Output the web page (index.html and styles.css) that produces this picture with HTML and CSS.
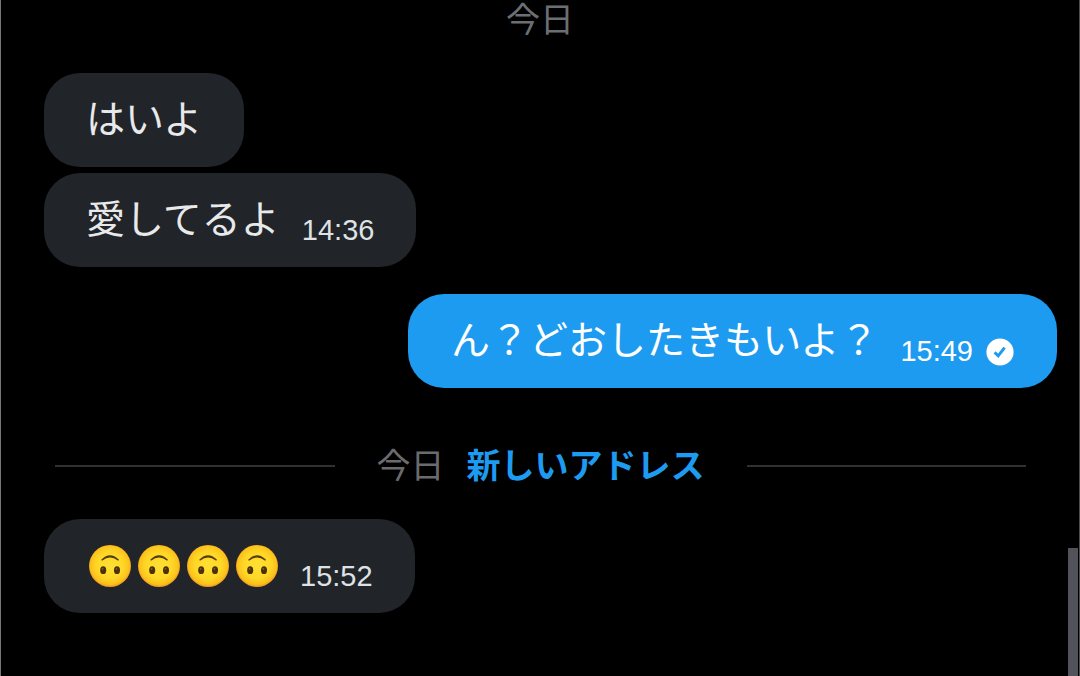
FILE: index.html
```html
<!DOCTYPE html>
<html lang="ja">
<head>
    <meta charset="UTF-8">
    <meta name="viewport" content="width=device-width, initial-scale=1.0">
    <title>メッセージ</title>
    <link rel="stylesheet" href="styles.css">
</head>
<body>
    <!-- Upside-down face, reused in the last message -->
    <svg class="sprite" aria-hidden="true">
        <defs>
            <radialGradient id="faceFill" cx="50%" cy="48%" r="52%">
                <stop offset="0" stop-color="#ffe032"/>
                <stop offset="0.6" stop-color="#ffd827"/>
                <stop offset="0.88" stop-color="#fcc21b"/>
                <stop offset="1" stop-color="#ef9420"/>
            </radialGradient>
        </defs>
        <symbol id="face" viewBox="0 0 42 42">
            <circle cx="21" cy="21" r="21" fill="url(#faceFill)"/>
            <path d="M12.4 14.6 Q21 5.8 29.8 14.6 Q30 15.8 28.8 15.4 Q21 9.6 13.4 15.4 Q12.2 15.8 12.4 14.6 Z" fill="#5a3c12"/>
            <ellipse cx="14.2" cy="25.2" rx="3" ry="3.9" fill="#4b300c"/>
            <ellipse cx="28" cy="25.2" rx="3" ry="3.9" fill="#4b300c"/>
            <circle cx="13.6" cy="23.8" r="0.9" fill="#8a6428"/>
            <circle cx="27.4" cy="23.8" r="0.9" fill="#8a6428"/>
        </symbol>
    </svg>

    <main class="chat">
        <p class="day">今日</p>

        <div class="message">
            <p class="text">はいよ</p>
        </div>
        <div class="message">
            <p class="text">愛してるよ</p>
            <time class="time">14:36</time>
        </div>

        <div class="message sent">
            <p class="text">ん？どおしたきもいよ？</p>
            <time class="time">15:49</time>
            <svg class="check" viewBox="0 0 28 28" role="img" aria-label="送信済み">
                <circle cx="14" cy="14" r="13.6" fill="#fff"/>
                <path d="M8.6 14.4 L12.2 17.8 L18.6 9.6" fill="none" stroke="#1d9bf0" stroke-width="3"/>
            </svg>
        </div>

        <div class="divider">
            <span class="divider-day">今日</span>
            <strong class="divider-new">新しいアドレス</strong>
        </div>

        <div class="message">
            <p class="faces">
                <svg class="face"><use href="#face"/></svg>
                <svg class="face"><use href="#face"/></svg>
                <svg class="face"><use href="#face"/></svg>
                <svg class="face"><use href="#face"/></svg>
            </p>
            <time class="time">15:52</time>
        </div>

        <div class="scrollbar"></div>
    </main>
</body>
</html>
```

FILE: styles.css
```css
* {
    box-sizing: border-box;
}
body {
    margin: 0;
    background-color: #000;
    color: #e7e9ea;
    font-family: "Liberation Sans", "Noto Sans CJK JP", sans-serif;
}
p {
    margin: 0;
}
.sprite {
    position: absolute;
    width: 0;
    height: 0;
}
.chat {
    position: relative;
    display: flex;
    flex-direction: column;
    align-items: flex-start;
    gap: 6px;
    min-height: 100vh;
    padding: 0 22px 0 43px;
    border-left: 1px solid #77777a;
    border-right: 1px solid #4c4c50;
}
.day {
    align-self: center;
    margin-right: 21px;
    margin-bottom: 27px;
    font-size: 34px;
    line-height: 40px;
    color: #6b6f73;
}
.message {
    display: flex;
    align-items: flex-end;
    padding: 20px 42px;
    border-radius: 36px;
    background-color: #212428;
}
.text {
    padding-bottom: 8px;
    font-family: "Noto Sans CJK JP", sans-serif;
    font-size: 39px;
    line-height: 46px;
}
.time {
    margin-left: 22px;
    font-size: 29px;
    line-height: 34px;
    color: #dfe2e4;
}
.sent {
    align-self: flex-end;
    margin-top: 21px;
    padding: 20px 43px;
    background-color: #1d9bf0;
    color: #fff;
}
.sent .time {
    color: #fff;
}
.check {
    width: 28px;
    height: 28px;
    margin-left: 13px;
    margin-bottom: 2px;
}

/* "new messages" line */
.divider {
    align-self: stretch;
    display: flex;
    align-items: center;
    gap: 22px;
    margin: 47px 31px 22px 11px;
    font-size: 34px;
    line-height: 50px;
}
.divider::before,
.divider::after {
    content: "";
    flex: 1;
    height: 2px;
    background-color: #2f3133;
}
.divider::before {
    margin-right: 20px;
}
.divider::after {
    margin-left: 20px;
}
.divider-day {
    color: #6b6b6e;
}
.divider-new {
    color: #1d9bf0;
}

.faces {
    display: flex;
    align-items: center;
    gap: 7px;
    height: 54px;
    padding-left: 3px;
}
.face {
    width: 42px;
    height: 42px;
}
.scrollbar {
    position: absolute;
    right: 1px;
    bottom: 0;
    width: 10px;
    height: 128px;
    background-color: #52525b;
}
```
